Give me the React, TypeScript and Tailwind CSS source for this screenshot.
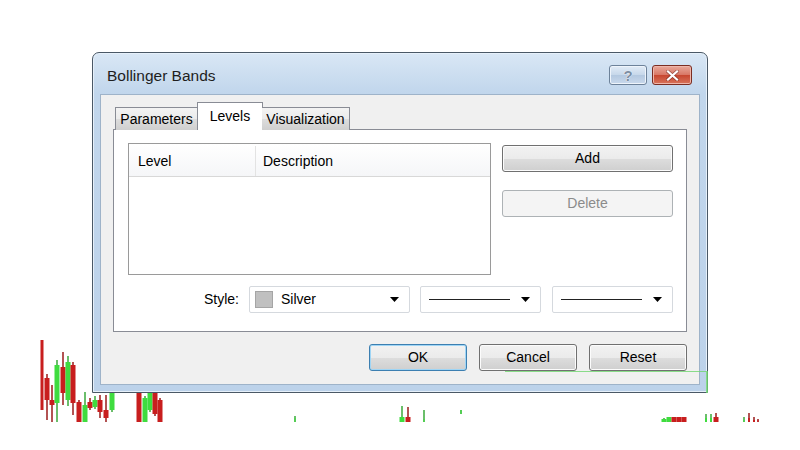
import React from 'react'

type Candle = { x: number; hi: number; lo: number; o: number; c: number; up: boolean; w?: number }

// price bars of the chart window behind the dialog
const candles: Candle[] = [
  { x: 42, hi: 340, lo: 410, o: 340, c: 410, up: false, w: 3 },
  { x: 47, hi: 374, lo: 420, o: 378, c: 400, up: false },
  { x: 52, hi: 385, lo: 422, o: 400, c: 405, up: false },
  { x: 57, hi: 360, lo: 422, o: 365, c: 403, up: true },
  { x: 63, hi: 352, lo: 405, o: 367, c: 393, up: false },
  { x: 68, hi: 356, lo: 406, o: 362, c: 400, up: true },
  { x: 73, hi: 362, lo: 415, o: 365, c: 403, up: false },
  { x: 79, hi: 400, lo: 422, o: 402, c: 422, up: false },
  { x: 85, hi: 392, lo: 422, o: 405, c: 422, up: true },
  { x: 90, hi: 398, lo: 410, o: 402, c: 408, up: false },
  { x: 95, hi: 396, lo: 409, o: 400, c: 407, up: true },
  { x: 100, hi: 395, lo: 418, o: 400, c: 412, up: false },
  { x: 106, hi: 395, lo: 422, o: 410, c: 418, up: false },
  { x: 112, hi: 390, lo: 412, o: 392, c: 410, up: true },
  { x: 139, hi: 390, lo: 422, o: 392, c: 422, up: false },
  { x: 145, hi: 396, lo: 422, o: 398, c: 422, up: true },
  { x: 150, hi: 390, lo: 412, o: 392, c: 410, up: true },
  { x: 155, hi: 390, lo: 416, o: 392, c: 414, up: false },
  { x: 160, hi: 398, lo: 422, o: 400, c: 422, up: false },
  { x: 295, hi: 416, lo: 422, o: 418, c: 422, up: true, w: 1 },
  { x: 402, hi: 406, lo: 422, o: 417, c: 422, up: true },
  { x: 408, hi: 407, lo: 422, o: 417, c: 422, up: false },
  { x: 424, hi: 410, lo: 422, o: 419, c: 422, up: true, w: 1 },
  { x: 461, hi: 410, lo: 414, o: 410, c: 414, up: true, w: 1 },
  { x: 664, hi: 418, lo: 422, o: 419, c: 422, up: true },
  { x: 669, hi: 417, lo: 422, o: 417, c: 422, up: true },
  { x: 674, hi: 417, lo: 422, o: 417, c: 422, up: false },
  { x: 679, hi: 417, lo: 422, o: 417, c: 422, up: false },
  { x: 684, hi: 417, lo: 422, o: 417, c: 422, up: false },
  { x: 706, hi: 414, lo: 422, o: 418, c: 422, up: true, w: 2 },
  { x: 711, hi: 414, lo: 422, o: 418, c: 422, up: true, w: 2 },
  { x: 716, hi: 413, lo: 422, o: 417, c: 422, up: false },
  { x: 744, hi: 417, lo: 422, o: 420, c: 422, up: true, w: 1 },
  { x: 749, hi: 413, lo: 422, o: 418, c: 422, up: false, w: 2 },
  { x: 754, hi: 417, lo: 422, o: 420, c: 422, up: false, w: 2 },
  { x: 758, hi: 419, lo: 422, o: 420, c: 422, up: false, w: 1 },
]

function Chart() {
  return (
    <svg className="absolute inset-0" width={800} height={450} viewBox="0 0 800 450">
      {candles.map((k) => {
        const col = k.up ? '#3fdc3f' : '#c81e1e'
        const w = k.w ?? 5
        return (
          <g key={k.x}>
            <line x1={k.x} x2={k.x} y1={k.hi} y2={k.lo} stroke={k.up ? '#3aa83a' : '#9a1a1a'} strokeWidth={1.5} />
            <rect x={k.x - w / 2} y={Math.min(k.o, k.c)} width={w} height={Math.max(Math.abs(k.c - k.o), 1)} fill={col} />
          </g>
        )
      })}
    </svg>
  )
}

function Btn({ label, w, kind }: { label: string; w: string; kind?: 'default' | 'disabled' }) {
  const border =
    kind === 'default'
      ? 'border-[#3c7fb1] shadow-[inset_0_0_0_1px_#9fd5f5]'
      : kind === 'disabled'
        ? 'border-[#adb2b5]'
        : 'border-[#707070] shadow-[inset_0_0_0_1px_#fcfcfc]'
  const bg =
    kind === 'disabled'
      ? 'bg-[#f4f4f4] text-[#8b8b8b]'
      : 'bg-[linear-gradient(#f2f2f2_0%,#ebebeb_50%,#dddddd_51%,#cfcfcf_100%)] text-black'
  return (
    <div className={`${w} flex h-[27px] items-center justify-center rounded-[3px] border ${border} ${bg}`}>
      {label}
    </div>
  )
}

function Arrow() {
  return (
    <svg width="9" height="5" viewBox="0 0 9 5">
      <path d="M0 0h9L4.5 5z" fill="#000" />
    </svg>
  )
}

function Combo({ w, children }: { w: string; children: React.ReactNode }) {
  return (
    <div className={`${w} flex h-[27px] items-center rounded-[2px] border border-[#d5d9de] bg-white pr-[10px]`}>
      <div className="flex flex-1 items-center">{children}</div>
      <Arrow />
    </div>
  )
}

export default function App() {
  return (
    <div className="relative h-[450px] w-[800px] overflow-hidden bg-white font-['Liberation_Sans',Arial,sans-serif] text-[14px] text-black">
      <Chart />

      {/* dialog window */}
      <div className="absolute left-[92px] top-[52px] flex h-[341px] w-[616px] flex-col rounded-t-[7px] border border-[#4a5866] bg-[linear-gradient(#d9e7f5,#c1d6ec_40px,#bcd2ea)] shadow-[inset_0_0_0_1px_#e6f0fa]">
        {/* title bar */}
        <div className="flex h-[41px] items-center pl-[14px] pr-[15px]">
          <span className="flex-1 pt-[5px] text-[15.5px] text-[#1e1e1e]">Bollinger Bands</span>
          <div className="flex items-center gap-[5px] pt-[3px]">
            <div className="flex h-[20px] w-[38px] items-center justify-center rounded-[3px] border border-[#6d829a] bg-[linear-gradient(#e2ecf7,#c6d7ea_50%,#b3c8e0_51%,#c9d9ec)] shadow-[inset_0_0_0_1px_#eef4fb]">
              <span className="text-[15px] font-bold leading-none text-[#7d8ea3] [text-shadow:0_0_1px_#ffffff,0_0_1px_#ffffff]">?</span>
            </div>
            <div className="flex h-[20px] w-[40px] items-center justify-center rounded-[3px] border border-[#7b2d22] bg-[linear-gradient(#e9a99b,#d87664_50%,#c7462f_51%,#d8745c)] shadow-[inset_0_0_0_1px_#efb6aa]">
              <svg width="13" height="11" viewBox="0 0 13 11">
                <path d="M2 1.5l9 8M11 1.5l-9 8" stroke="#5a1a12" strokeWidth="3.6" strokeLinecap="square" opacity="0.5" />
                <path d="M2 1.5l9 8M11 1.5l-9 8" stroke="#fff" strokeWidth="2.2" strokeLinecap="square" />
              </svg>
            </div>
          </div>
        </div>

        {/* client area */}
        <div className="mx-[7px] mb-[7px] flex flex-1 flex-col border border-[#9eb3c9] bg-[#f0f0f0] px-[12px] pt-[7px]">
          {/* tabs */}
          <div className="relative z-10 -mb-px flex items-end pl-[2px]">
            <div className="flex h-[23px] w-[83px] items-center justify-center border border-b-0 border-[#898c95] bg-[linear-gradient(#f3f3f3,#ebebeb_50%,#dddddd_51%,#cfcfcf)] pt-[1px]">
              Parameters
            </div>
            <div className="-mx-[1px] flex h-[28px] w-[66px] items-start justify-center border border-b-0 border-[#898c95] bg-white pt-[3px]">
              Levels
            </div>
            <div className="flex h-[23px] w-[88px] items-center justify-center border border-b-0 border-l-0 border-[#898c95] bg-[linear-gradient(#f3f3f3,#ebebeb_50%,#dddddd_51%,#cfcfcf)] pt-[1px]">
              Visualization
            </div>
          </div>

          {/* tab page */}
          <div className="flex h-[203px] flex-col border border-[#898c95] bg-white pb-[17px] pl-[14px] pr-[13px] pt-[13px]">
            <div className="flex items-start gap-[11px]">
              <div className="flex h-[132px] w-[364px] flex-col border border-[#9a9a9a] bg-white">
                <div className="flex h-[33px] border-b border-[#d8d8d8] bg-[linear-gradient(#ffffff,#f5f6f8)] pt-[2px]">
                  <div className="flex w-[127px] items-center border-r border-[#e3e3e3] pl-[9px]">Level</div>
                  <div className="flex flex-1 items-center pl-[7px]">Description</div>
                </div>
              </div>
              <div className="flex flex-col gap-[18px] pt-[2px]">
                <Btn label="Add" w="w-[171px]" />
                <Btn label="Delete" w="w-[171px]" kind="disabled" />
              </div>
            </div>
            <div className="mt-[11px] flex items-center">
              <span className="w-[121px] pr-[10px] text-right">Style:</span>
              <Combo w="w-[161px]">
                <div className="ml-[5px] h-[17px] w-[18px] border border-[#a5a5a5] bg-[#c0c0c0]" />
                <span className="ml-[8px]">Silver</span>
              </Combo>
              <div className="w-[10px]" />
              <Combo w="w-[121px]">
                <div className="ml-[8px] h-px w-[81px] bg-[#222]" />
              </Combo>
              <div className="w-[11px]" />
              <Combo w="w-[121px]">
                <div className="ml-[8px] h-px w-[81px] bg-[#222]" />
              </Combo>
            </div>
          </div>

          {/* dialog buttons */}
          <div className="mt-[12px] flex justify-end gap-[12px]">
            <Btn label="OK" w="w-[98px]" kind="default" />
            <Btn label="Cancel" w="w-[98px]" />
            <Btn label="Reset" w="w-[98px]" />
          </div>
        </div>
      </div>

      {/* chart frame line drawn over the dialog */}
      <div className="absolute left-[505px] top-[371px] h-[22px] w-[203px] border-r-2 border-t border-[#6fd66f]/80" />
    </div>
  )
}
